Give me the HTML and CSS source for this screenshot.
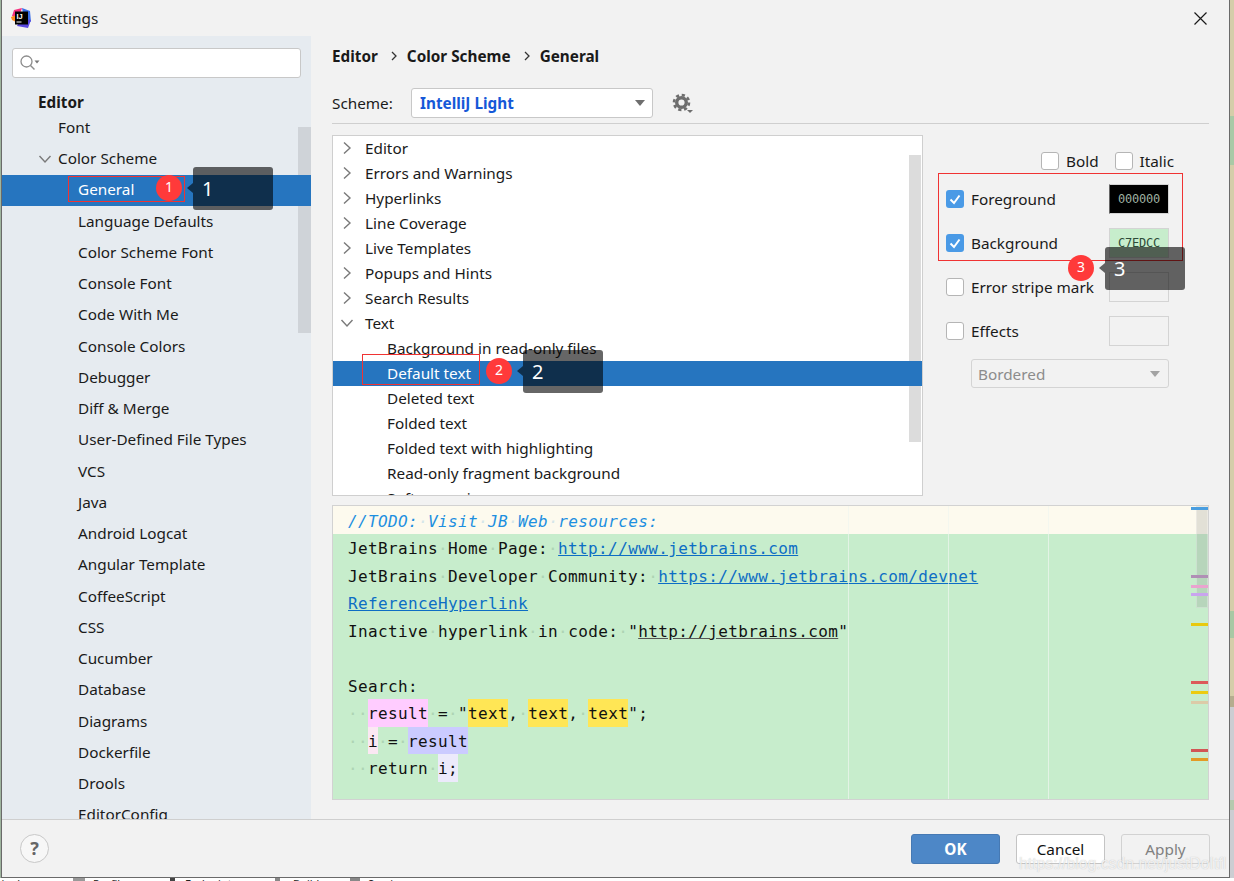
FILE: index.html
```html
<!DOCTYPE html>
<html lang="en">
<head>
<meta charset="utf-8">
<title>Settings</title>
<link rel="stylesheet" href="styles.css">
</head>
<body>
<svg class="defs" width="0" height="0" aria-hidden="true">
  <defs>
    <symbol id="chev-r" viewBox="0 0 10 14"><path d="M2 1.5 8 7 2 12.5" fill="none" stroke="#7a7a7a" stroke-width="1.4"/></symbol>
    <symbol id="chev-d" viewBox="0 0 14 10"><path d="M1.5 2 7 8 12.5 2" fill="none" stroke="#7a7a7a" stroke-width="1.4"/></symbol>
  </defs>
</svg>
<div class="page">
  <div class="top">
    <div class="edge-left"></div>
    <div class="window">
      <header class="titlebar">
        <svg class="logo" viewBox="0 0 20 20" width="20" height="20" aria-hidden="true">
          <path d="M3 2 11 0 8 9 1 8Z" fill="#f5317f"/>
          <path d="M11 0 19 3 20 14 13 10Z" fill="#3b6fe8"/>
          <path d="M0 9 5 7 5 14 1 12Z" fill="#ff8a1f"/>
          <path d="M6 18 17 20 20 12 10 10Z" fill="#5a48e0"/>
          <rect x="4" y="3.500" width="13" height="13" fill="#000"/>
          <text x="5.500" y="11" class="logo-text">IJ</text>
          <rect x="5.500" y="13.500" width="5" height="1" fill="#fff"/>
        </svg>
        <span class="title">Settings</span>
        <svg class="close" viewBox="0 0 13 13" width="13" height="13" aria-hidden="true"><path d="M.5.5 12.500 12.500M12.500.5.5 12.500" stroke="#1a1a1a" stroke-width="1.200" fill="none"/></svg>
      </header>
      <div class="main">
        <aside class="sidebar">
          <div class="search">
            <svg class="search-icon" viewBox="0 0 22 18" width="22" height="18" aria-hidden="true">
              <circle cx="7.500" cy="7.500" r="5.500" fill="none" stroke="#8c8c8c" stroke-width="1.300"/>
              <path d="M11.500 11.500 15.500 15.500" stroke="#8c8c8c" stroke-width="1.500"/>
              <path d="M15.500 6.500h5l-2.500 3z" fill="#777"/>
            </svg>
          </div>
          <div class="side-head">Editor</div>
          <ul class="side-list">
            <li class="lvl1">Font</li>
            <li class="lvl1"><svg class="side-chev" width="14" height="10"><use href="#chev-d"/></svg>Color Scheme</li>
            <li class="lvl2 sel">General</li>
            <li class="lvl2">Language Defaults</li>
            <li class="lvl2">Color Scheme Font</li>
            <li class="lvl2">Console Font</li>
            <li class="lvl2">Code With Me</li>
            <li class="lvl2">Console Colors</li>
            <li class="lvl2">Debugger</li>
            <li class="lvl2">Diff &amp; Merge</li>
            <li class="lvl2">User-Defined File Types</li>
            <li class="lvl2">VCS</li>
            <li class="lvl2">Java</li>
            <li class="lvl2">Android Logcat</li>
            <li class="lvl2">Angular Template</li>
            <li class="lvl2">CoffeeScript</li>
            <li class="lvl2">CSS</li>
            <li class="lvl2">Cucumber</li>
            <li class="lvl2">Database</li>
            <li class="lvl2">Diagrams</li>
            <li class="lvl2">Dockerfile</li>
            <li class="lvl2">Drools</li>
            <li class="lvl2">EditorConfig</li>
          </ul>
          <div class="side-scroll"></div>
        </aside>
        <section class="pane">
          <nav class="crumbs">
            <span>Editor</span><svg class="crumb-sep" width="6" height="10" viewBox="0 0 6 10"><path d="M1 1 5 5 1 9" fill="none" stroke="#333" stroke-width="1.300"/></svg>
            <span>Color Scheme</span><svg class="crumb-sep" width="6" height="10" viewBox="0 0 6 10"><path d="M1 1 5 5 1 9" fill="none" stroke="#333" stroke-width="1.300"/></svg>
            <span>General</span>
          </nav>
          <div class="scheme">
            <span class="scheme-label">Scheme:</span>
            <div class="combo"><span class="combo-val">IntelliJ Light</span><i class="tri"></i></div>
            <svg class="gear" viewBox="0 0 22 22" width="22" height="22" aria-hidden="true">
              <circle cx="9.500" cy="9.500" r="4.800" fill="none" stroke="#6e6e6e" stroke-width="3.400"/>
              <circle cx="9.500" cy="9.500" r="7.500" fill="none" stroke="#6e6e6e" stroke-width="2.600" stroke-dasharray="3.200 2.690"/>
              <path d="M15 17h6l-3 3z" fill="#6e6e6e"/>
            </svg>
          </div>
          <div class="rule"></div>
          <div class="mid">
            <div class="tree">
              <div class="node"><svg class="tree-chev" width="10" height="14"><use href="#chev-r"/></svg>Editor</div>
              <div class="node"><svg class="tree-chev" width="10" height="14"><use href="#chev-r"/></svg>Errors and Warnings</div>
              <div class="node"><svg class="tree-chev" width="10" height="14"><use href="#chev-r"/></svg>Hyperlinks</div>
              <div class="node"><svg class="tree-chev" width="10" height="14"><use href="#chev-r"/></svg>Line Coverage</div>
              <div class="node"><svg class="tree-chev" width="10" height="14"><use href="#chev-r"/></svg>Live Templates</div>
              <div class="node"><svg class="tree-chev" width="10" height="14"><use href="#chev-r"/></svg>Popups and Hints</div>
              <div class="node"><svg class="tree-chev" width="10" height="14"><use href="#chev-r"/></svg>Search Results</div>
              <div class="node"><svg class="tree-chev-d" width="14" height="10"><use href="#chev-d"/></svg>Text</div>
              <div class="leaf">Background in read-only files</div>
              <div class="leaf sel">Default text</div>
              <div class="leaf">Deleted text</div>
              <div class="leaf">Folded text</div>
              <div class="leaf">Folded text with highlighting</div>
              <div class="leaf">Read-only fragment background</div>
              <div class="leaf">Soft wrap sign</div>
              <div class="tree-scroll"></div>
            </div>
            <div class="options">
              <div class="style-row">
                <label class="opt"><i class="box"></i>Bold</label>
                <label class="opt"><i class="box"></i>Italic</label>
              </div>
              <div class="attr">
                <label class="opt"><i class="box on"><svg viewBox="0 0 18 18" width="18" height="18"><path d="M4.500 9.500 8 13 13.500 5.500" fill="none" stroke="#fff" stroke-width="2"/></svg></i>Foreground</label>
                <div class="swatch black">000000</div>
              </div>
              <div class="attr">
                <label class="opt"><i class="box on"><svg viewBox="0 0 18 18" width="18" height="18"><path d="M4.500 9.500 8 13 13.500 5.500" fill="none" stroke="#fff" stroke-width="2"/></svg></i>Background</label>
                <div class="swatch green">C7EDCC</div>
              </div>
              <div class="attr">
                <label class="opt"><i class="box"></i>Error stripe mark</label>
                <div class="swatch"></div>
              </div>
              <div class="attr">
                <label class="opt"><i class="box"></i>Effects</label>
                <div class="swatch"></div>
              </div>
              <div class="effect-select"><span>Bordered</span><i class="tri light"></i></div>
            </div>
          </div>
          <div class="preview">
            <div class="code-line todo"><em>//TODO:<b>·</b>Visit<b>·</b>JB<b>·</b>Web<b>·</b>resources:</em></div>
            <div class="code-line">JetBrains<b>·</b>Home<b>·</b>Page:<b>·</b><a>http://www.jetbrains.com</a></div>
            <div class="code-line">JetBrains<b>·</b>Developer<b>·</b>Community:<b>·</b><a>https://www.jetbrains.com/devnet</a></div>
            <div class="code-line"><a>ReferenceHyperlink</a></div>
            <div class="code-line">Inactive<b>·</b>hyperlink<b>·</b>in<b>·</b>code:<b>·</b>"<u>http://jetbrains.com</u>"</div>
            <div class="code-line"></div>
            <div class="code-line">Search:</div>
            <div class="code-line"><b>··</b><span class="hl-pink">result</span><b>·</b>=<b>·</b>"<span class="hl-yellow">text</span>,<b>·</b><span class="hl-yellow">text</span>,<b>·</b><span class="hl-yellow">text</span>";</div>
            <div class="code-line"><b>··</b><span class="hl-rose">i</span><b>·</b>=<b>·</b><span class="hl-blue">result</span></div>
            <div class="code-line"><b>··</b>return<b>·</b><span class="hl-lilac">i;</span></div>
            <i class="guide g1"></i><i class="guide g2"></i><i class="guide g3"></i>
            <div class="thumb"></div>
            <i class="mark m1"></i><i class="mark m2"></i><i class="mark m3"></i><i class="mark m4"></i><i class="mark m5"></i>
            <i class="mark m6"></i><i class="mark m7"></i><i class="mark m8"></i><i class="mark m9"></i><i class="mark m10"></i>
          </div>
        </section>
      </div>
      <footer class="footer">
        <div class="help">?</div>
        <div class="buttons">
          <button class="btn primary">OK</button>
          <button class="btn">Cancel</button>
          <button class="btn off">Apply</button>
        </div>
      </footer>
    </div>
    <div class="edge-right"></div>
  </div>
  <div class="under">
    <span class="u-term">Terminal</span><i class="u-ring"></i><span class="u-prof">Profiler</span><i class="u-a"></i><span class="u-end">Endpoints</span><i class="u-b"></i><span class="u-build">Build</span><i class="u-c"></i><span class="u-serv">Services</span>
  </div>

  <div class="frame f1"></div>
  <div class="badge b1">1</div>
  <div class="tip t1">1</div>
  <div class="frame f2"></div>
  <div class="badge b2">2</div>
  <div class="tip t2">2</div>
  <div class="frame f3"></div>
  <div class="badge b3">3</div>
  <div class="tip t3">3</div>
  <div class="watermark">https://blog.csdn.net/justDoItfl</div>
</div>
</body>
</html>
```

FILE: styles.css
```css
* { box-sizing: border-box; }
html, body { margin: 0; padding: 0; }
body { width: 1234px; height: 881px; overflow: hidden; background: #fff; font-family: "Noto Sans", "Liberation Sans", sans-serif; font-size: 15.300px; color: #1a1a1a; }
.defs { position: absolute; }
.page { position: relative; width: 1234px; height: 881px; display: flex; flex-direction: column; }
.top { display: flex; height: 878px; }
.edge-left { width: 1px; background: #9fb59f; }
.edge-right { flex: 1; background: linear-gradient(#d5cda9 0 116px, #a9c9a6 116px 165px, #d5cda9 165px 611px, #a8c8a4 611px 638px, #d5cda9 638px 696px, #b5ad8f 696px 707px, #cccdd2 707px 800px, #b6c9ae 800px 810px, #cccdd2 810px); }
.window { width: 1229px; display: flex; flex-direction: column; background: #f2f2f2; border-left: 1px solid #6a6a6a; border-right: 1px solid #6a6a6a; border-bottom: 1px solid #6a6a6a; }

.titlebar { height: 36px; display: flex; align-items: center; padding-left: 9px; padding-right: 22px; }
.logo { margin-right: 9px; margin-top: -1px; }
.logo-text { font: 700 7.500px "Liberation Sans", sans-serif; fill: #fff; }
.title { font-size: 15.300px; color: #222; }
.close { margin-left: auto; }

.main { flex: 1; display: flex; min-height: 0; }
.sidebar { position: relative; width: 309px; background: #e6ebf0; overflow: hidden; padding-top: 12px; }
.search { margin-left: 10px; width: 289px; height: 30px; background: #fff; border: 1px solid #c8c8c8; border-radius: 3px; display: flex; align-items: center; padding-left: 6px; }
.side-head { font-weight: 700; margin-top: 12px; padding-left: 36px; height: 22px; line-height: 24px; }
.side-list { list-style: none; margin: 0; padding: 0; }
.side-list li { height: 31.250px; padding-bottom: 1.500px; white-space: nowrap; display: flex; align-items: center; }
.lvl1 { padding-left: 56px; position: relative; }
.lvl2 { padding-left: 76px; }
.side-list .sel { position: relative; z-index: 1; background: #2675bf; color: #fff; }
.side-chev { position: absolute; left: 36px; top: 11px; }
.side-scroll { position: absolute; left: 296px; top: 91px; width: 13px; height: 206px; background: #cfd3d8; }

.pane { flex: 1; padding: 10px 20px 0 21px; }
.crumbs { height: 20px; display: flex; align-items: center; font-weight: 700; }
.crumb-sep { margin: 0 10px 0 13px; }
.scheme { margin-top: 22px; height: 30px; display: flex; align-items: center; }
.scheme-label { width: 79px; }
.combo { width: 242px; height: 30px; background: #fff; border: 1px solid #c8c8c8; border-radius: 3px; display: flex; align-items: center; justify-content: space-between; padding: 0 7px 0 8px; }
.combo-val { color: #1558d8; font-weight: 700; }
.tri { width: 0; height: 0; border-left: 5.500px solid transparent; border-right: 5.500px solid transparent; border-top: 6px solid #6e6e6e; }
.tri.light { border-top-color: #a3a3a3; }
.gear { margin-left: 19px; margin-top: 2px; }
.rule { margin-top: 5px; height: 1px; background: #cfcfcf; }

.mid { margin-top: 11px; display: flex; height: 361px; }
.tree { position: relative; width: 591px; background: #fff; border: 1px solid #cfcfcf; overflow: hidden; }
.node, .leaf { height: 25px; line-height: 24px; position: relative; white-space: nowrap; }
.node { padding-left: 32px; }
.leaf { padding-left: 54px; }
.leaf.sel { background: #2675bf; color: #fff; z-index: 1; }
.tree-chev { position: absolute; left: 9px; top: 5px; }
.tree-chev-d { position: absolute; left: 7px; top: 7px; }
.tree-scroll { position: absolute; right: 1px; top: 19px; width: 12px; height: 287px; background: #dcdcdc; }

.options { flex: 1; padding: 16px 0 0 23px; }
.opt { display: inline-flex; align-items: center; gap: 7px; white-space: nowrap; }
.box { width: 18px; height: 18px; display: block; background: #fff; border: 1px solid #b5b5b5; border-radius: 3px; }
.box.on { background: #4a9ae6; border: 0; }
.box svg { display: block; }
.style-row { height: 20px; padding-left: 95px; display: flex; gap: 16px; margin-bottom: 6px; white-space: nowrap; }
.attr { width: 223px; height: 44px; display: flex; align-items: center; justify-content: space-between; }
.swatch { width: 60px; height: 30px; border: 1px solid #d4d4d4; background: #f2f2f2; font: 12px/28px "DejaVu Sans Mono", monospace; letter-spacing: -.2px; text-align: center; }
.swatch.black { background: #000; color: #9fb0a0; border-left-color: #666; }
.swatch.green { background: #c7edcc; color: #2e4a38; }
.effect-select { margin: 6px 0 0 25px; width: 198px; height: 29px; border: 1px solid #d4d4d4; border-radius: 3px; color: #8c8c8c; display: flex; align-items: center; justify-content: space-between; padding: 0 8px 0 6px; }

.preview { position: relative; margin-top: 9px; height: 295px; background: #c7edcc; border: 1px solid #d2d2d2; overflow: hidden; font: 16px "DejaVu Sans Mono", monospace; letter-spacing: .37px; color: #111; }
.code-line { height: 27.500px; line-height: 29.500px; padding-left: 15px; white-space: pre; }
.code-line b { font-weight: 400; color: #aed4b4; }
.todo { background: #fdfaee; height: 28.400px; line-height: 31px; color: #1d8fe0; }
.todo b { color: #d5e6ea; }
.code-line a { color: #0d6dc4; text-decoration: underline; }
.code-line u { text-decoration-color: #555; }
.hl-pink, .hl-yellow, .hl-rose, .hl-blue, .hl-lilac { display: inline-block; height: 27.500px; }
.hl-pink { background: #ffccff; }
.hl-yellow { background: #ffe655; }
.hl-rose { background: #fbe8f3; }
.hl-blue { background: #cbcbff; }
.hl-lilac { background: #eceafb; }
.guide { position: absolute; top: 0; bottom: 0; width: 1px; background: rgba(240, 245, 240, .7); }
.g1 { left: 515px; }
.g2 { left: 615px; }
.g3 { left: 715px; }
.thumb { position: absolute; left: 863px; top: 0; width: 12px; height: 102px; background: rgba(120, 120, 120, .2); border: 1px solid rgba(255, 255, 255, .3); }
.mark { position: absolute; left: 858px; width: 17px; height: 3px; }
.m1 { top: 1px; background: #4a9ee0; }
.m2 { top: 69px; background: #b08fb5; }
.m3 { top: 79px; background: #eaa3cf; }
.m4 { top: 87px; background: #c9a4ee; }
.m5 { top: 117px; background: #e8c90f; }
.m6 { top: 175px; background: #dc5a5a; }
.m7 { top: 185px; background: #eccb10; }
.m8 { top: 195px; background: #dccba8; }
.m9 { top: 243px; background: #d25555; }
.m10 { top: 252px; background: #e39a25; }

.footer { height: 58px; border-top: 1px solid #cfcfcf; display: flex; justify-content: space-between; padding: 14px 19px 0 18px; }
.help { width: 29px; height: 29px; border-radius: 50%; background: #f7f7f7; border: 1px solid #c8c8c8; color: #666; font-weight: 700; font-size: 18px; line-height: 27px; text-align: center; }
.buttons { display: flex; gap: 16px; }
.btn { width: 89px; height: 30px; font: 15.300px "Noto Sans", "Liberation Sans", sans-serif; color: #111; background: #fff; border: 1px solid #c4c4c4; border-radius: 3px; padding: 0; }
.btn.primary { background: #4d87c7; border-color: #4679b3; color: #fff; font-weight: 700; }
.btn.off { background: #f2f2f2; color: #808080; border-color: #d2d2d2; }

.under { height: 3px; overflow: hidden; display: flex; font-size: 11px; line-height: 11px; color: #222; white-space: nowrap; }
.under i { height: 3px; background: #444; flex: none; }
.under span { flex: none; }
.u-term { margin-left: -25px; width: 42px; }
.under .u-ring { margin-left: 56px; width: 12px; background: #999; }
.u-prof { margin-left: 8px; width: 32px; }
.u-a { margin-left: 45px; width: 5px; }
.u-end { margin-left: 10px; width: 42px; }
.under .u-b { margin-left: 48px; width: 5px; background: #888; }
.u-build { margin-left: 13px; width: 27px; }
.under .u-c { margin-left: 30px; width: 10px; background: #888; }
.u-serv { margin-left: 8px; }

.frame, .badge, .tip { z-index: 2; }
.frame { position: absolute; border: 1px solid #f03333; }
.f1 { left: 68px; top: 176px; width: 117px; height: 26px; }
.f2 { left: 362px; top: 354px; width: 118px; height: 31px; }
.f3 { left: 938px; top: 173px; width: 245px; height: 88px; }
.badge { position: absolute; width: 26px; height: 26px; border-radius: 50%; background: #ff3a3a; color: #fff; font-size: 14px; line-height: 23px; text-align: center; }
.b1 { left: 156px; top: 175px; }
.b2 { left: 486px; top: 358px; }
.b3 { left: 1068px; top: 255px; }
.tip { position: absolute; width: 80px; height: 43px; background: rgba(0, 0, 0, .6); border-radius: 3px; color: #fff; font-size: 20px; line-height: 43px; padding-left: 9px; }
.tip::before { content: ""; position: absolute; left: -6px; top: 16px; border-top: 5.500px solid transparent; border-bottom: 5.500px solid transparent; border-right: 6px solid rgba(0, 0, 0, .6); }
.t1 { left: 193px; top: 167px; }
.t2 { left: 523px; top: 350px; }
.t3 { left: 1105px; top: 247px; }
.watermark { position: absolute; z-index: 3; left: 1019px; top: 855px; font: 15.800px "Liberation Sans", sans-serif; color: rgba(255, 255, 255, .75); text-shadow: 0 0 1px rgba(150, 150, 150, .6); white-space: nowrap; }
```
